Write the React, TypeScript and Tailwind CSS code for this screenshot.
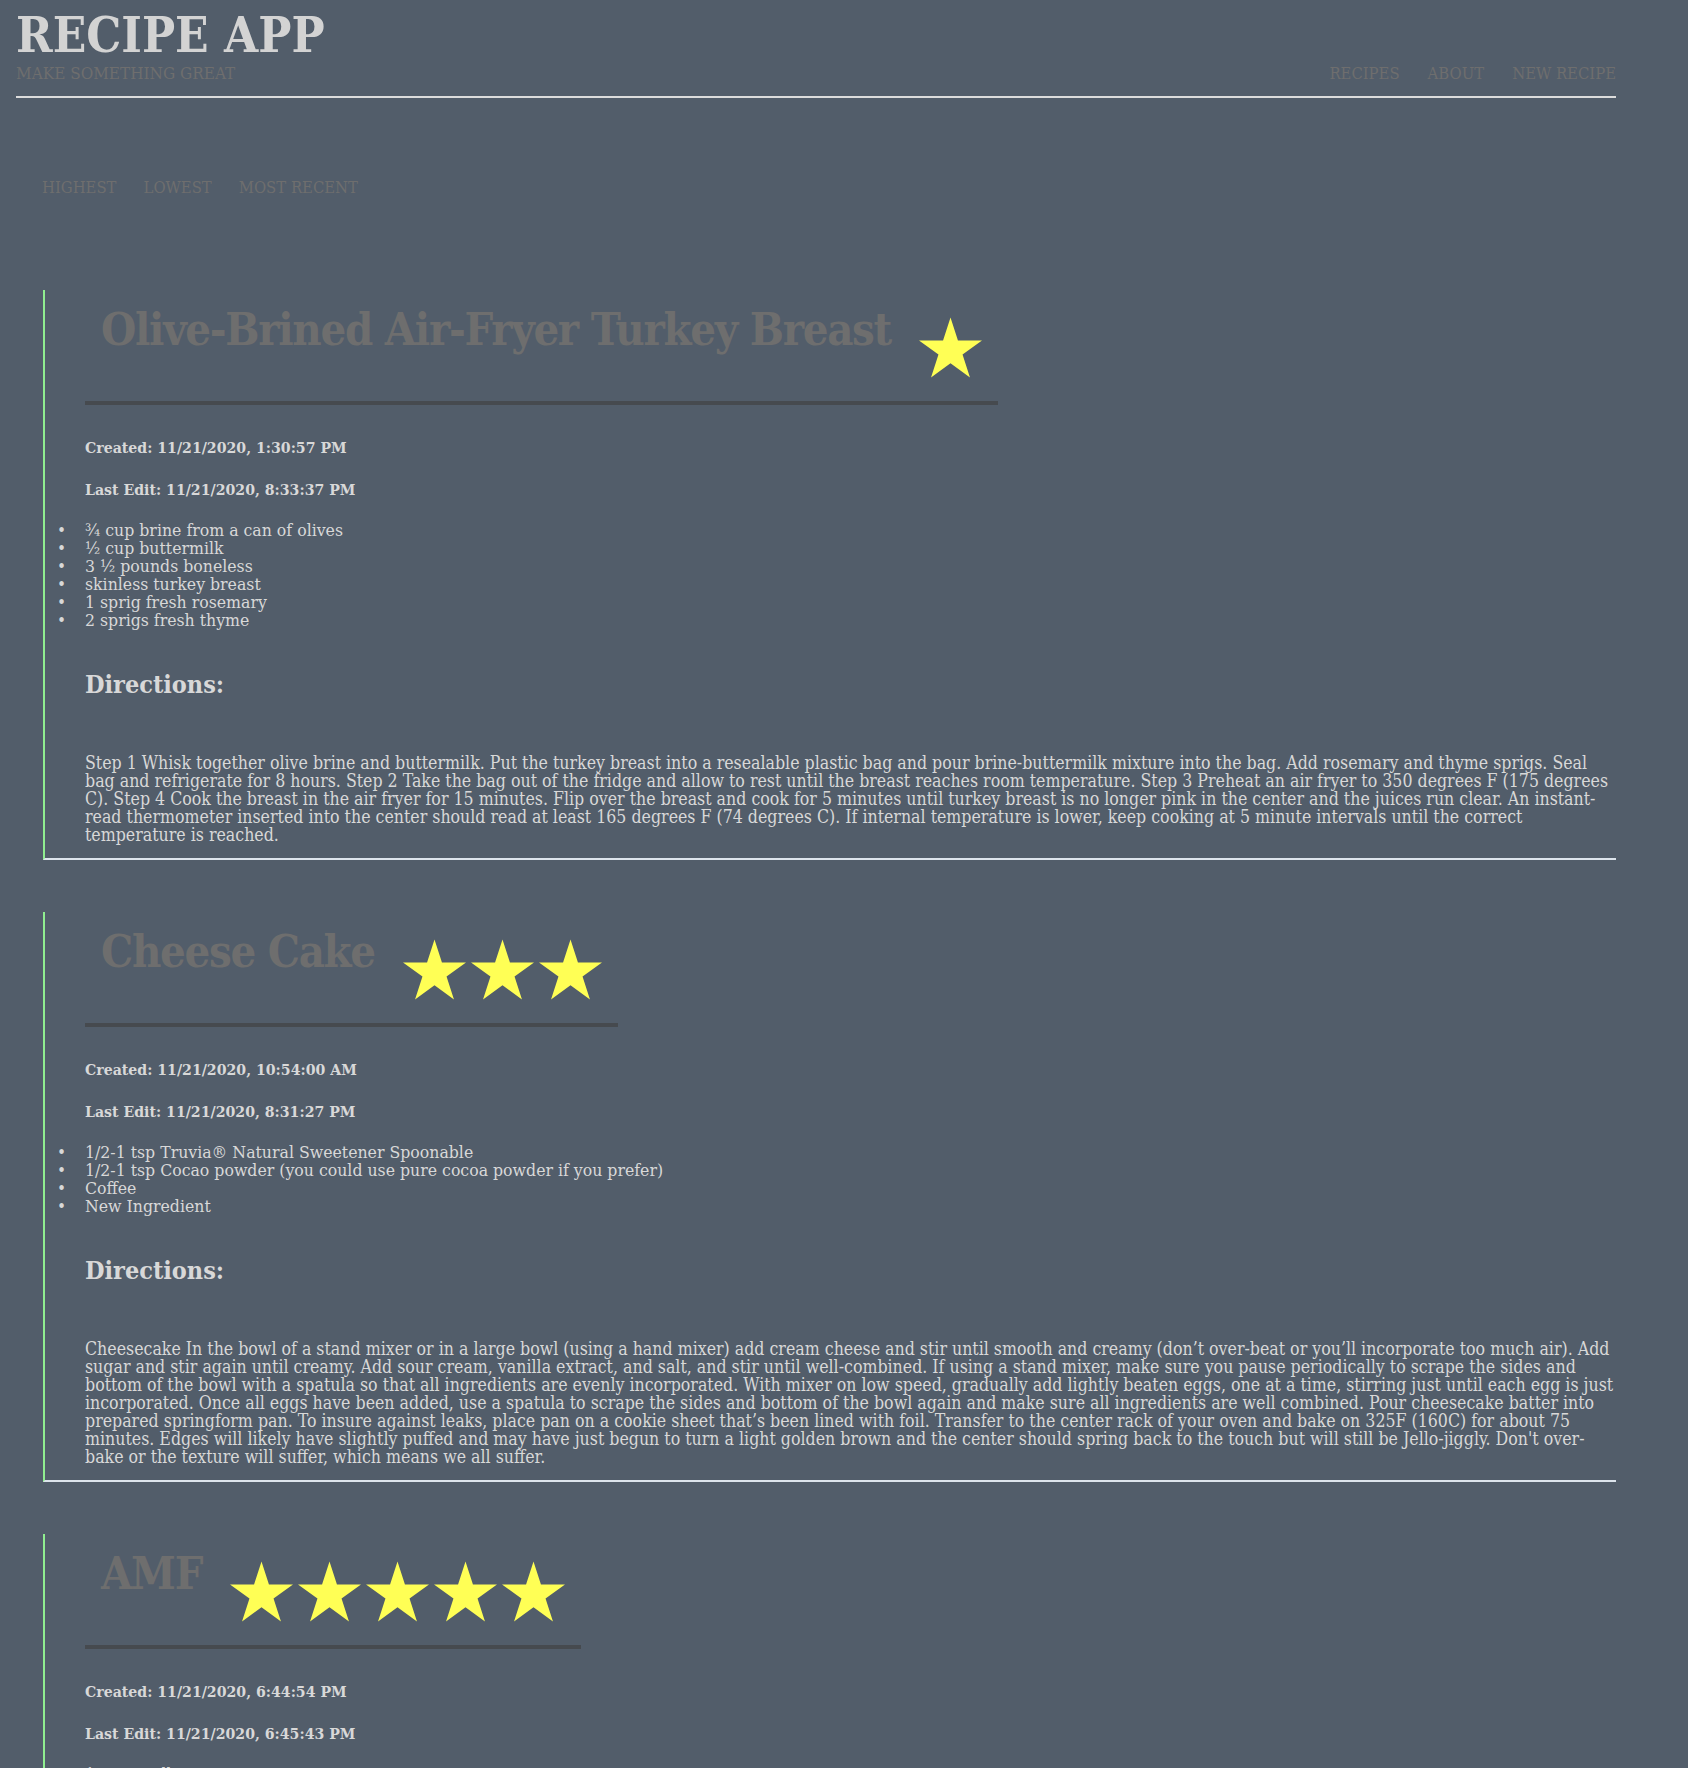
import React from "react";

type Recipe = {
  title: string;
  stars: number;
  created: string;
  edited: string;
  ingredients: string[];
  directions: string;
};

const recipes: Recipe[] = [
  {
    title: "Olive-Brined Air-Fryer Turkey Breast",
    stars: 1,
    created: "11/21/2020, 1:30:57 PM",
    edited: "11/21/2020, 8:33:37 PM",
    ingredients: [
      "¾ cup brine from a can of olives",
      "½ cup buttermilk",
      "3 ½ pounds boneless",
      "skinless turkey breast",
      "1 sprig fresh rosemary",
      "2 sprigs fresh thyme",
    ],
    directions:
      "Step 1 Whisk together olive brine and buttermilk. Put the turkey breast into a resealable plastic bag and pour brine-buttermilk mixture into the bag. Add rosemary and thyme sprigs. Seal bag and refrigerate for 8 hours. Step 2 Take the bag out of the fridge and allow to rest until the breast reaches room temperature. Step 3 Preheat an air fryer to 350 degrees F (175 degrees C). Step 4 Cook the breast in the air fryer for 15 minutes. Flip over the breast and cook for 5 minutes until turkey breast is no longer pink in the center and the juices run clear. An instant-read thermometer inserted into the center should read at least 165 degrees F (74 degrees C). If internal temperature is lower, keep cooking at 5 minute intervals until the correct temperature is reached.",
  },
  {
    title: "Cheese Cake",
    stars: 3,
    created: "11/21/2020, 10:54:00 AM",
    edited: "11/21/2020, 8:31:27 PM",
    ingredients: [
      "1/2-1 tsp Truvia® Natural Sweetener Spoonable",
      "1/2-1 tsp Cocao powder (you could use pure cocoa powder if you prefer)",
      "Coffee",
      "New Ingredient",
    ],
    directions:
      "Cheesecake In the bowl of a stand mixer or in a large bowl (using a hand mixer) add cream cheese and stir until smooth and creamy (don’t over-beat or you’ll incorporate too much air). Add sugar and stir again until creamy. Add sour cream, vanilla extract, and salt, and stir until well-combined. If using a stand mixer, make sure you pause periodically to scrape the sides and bottom of the bowl with a spatula so that all ingredients are evenly incorporated. With mixer on low speed, gradually add lightly beaten eggs, one at a time, stirring just until each egg is just incorporated. Once all eggs have been added, use a spatula to scrape the sides and bottom of the bowl again and make sure all ingredients are well combined. Pour cheesecake batter into prepared springform pan. To insure against leaks, place pan on a cookie sheet that’s been lined with foil. Transfer to the center rack of your oven and bake on 325F (160C) for about 75 minutes. Edges will likely have slightly puffed and may have just begun to turn a light golden brown and the center should spring back to the touch but will still be Jello-jiggly. Don't over-bake or the texture will suffer, which means we all suffer.",
  },
  {
    title: "AMF",
    stars: 5,
    created: "11/21/2020, 6:44:54 PM",
    edited: "11/21/2020, 6:45:43 PM",
    ingredients: ["1/2 oz vodka", "1/2 oz rum", "1/2 oz tequila", "1/2 oz gin"],
    directions: "Pour everything over ice and top with lemon-lime soda.",
  },
];

function Star() {
  return (
    <svg viewBox="2.45 0 95.1 90.45" className="h-[61px] w-[63px] shrink-0">
      <polygon
        fill="#ffff55"
        points="50,0 61.23,34.55 97.55,34.55 68.17,55.9 79.39,90.45 50,69.1 20.61,90.45 31.83,55.9 2.45,34.55 38.77,34.55"
      />
    </svg>
  );
}

function RecipeCard({ recipe }: { recipe: Recipe }) {
  return (
    <article className="ml-px border-b-2 border-l-2 border-b-[#dde4ec] border-l-[#90ee90] pb-[14px] pl-[40px]">
      <div className="inline-flex items-start border-b-4 border-[#464a4f] px-4 pt-[15px] pb-[23px]">
        <h2 className="mt-[2px] text-[45px] font-bold leading-none tracking-[-1.3px] text-[#6e6e6e]">
          {recipe.title}
        </h2>
        <div className="ml-[28px] mt-[12px] flex gap-[5px]">
          {Array.from({ length: recipe.stars }).map((_, i) => (
            <Star key={i} />
          ))}
        </div>
      </div>

      <p className="mt-[31px] text-[15.7px] font-bold leading-6 text-[#d8d8d8]">
        Created: {recipe.created}
      </p>
      <p className="mt-[18px] text-[15.7px] font-bold leading-6 text-[#d8d8d8]">
        Last Edit: {recipe.edited}
      </p>

      <ul className="mt-[19px] text-[17.5px] leading-[18px] text-[#d8d8d8]">
        {recipe.ingredients.map((item) => (
          <li key={item} className="-ml-[28px] flex">
            <span className="w-[28px] shrink-0 text-[17px]">•</span>
            <span>{item}</span>
          </li>
        ))}
      </ul>

      <h3 className="mt-[40px] text-[25px] font-bold leading-8 text-[#d8d8d8]">
        Directions:
      </h3>
      <p className="mt-[53px] text-[17.6px] leading-[18px] text-[#d8d8d8]">
        {recipe.directions}
      </p>
    </article>
  );
}

export default function App() {
  return (
    <div className="min-h-screen bg-[#525d6a] pb-10 font-['DejaVu_Serif_Condensed','DejaVu_Serif',serif]">
      <header className="ml-4 flex w-[1600px] items-end justify-between border-b-2 border-[#dcdcdc] pt-[11px] pb-[14px]">
        <div>
          <h1 className="text-[49px] font-bold leading-none text-[#d3d3d3]">
            RECIPE APP
          </h1>
          <p className="mt-[5px] text-[17px] leading-[17px] text-[#6e6e6e]">
            MAKE SOMETHING GREAT
          </p>
        </div>
        <nav className="flex gap-[28px] text-[16.5px] leading-[17px] text-[#6e6e6e]">
          <a href="#">RECIPES</a>
          <a href="#">ABOUT</a>
          <a href="#">NEW RECIPE</a>
        </nav>
      </header>

      <main className="ml-[42px] w-[1574px]">
        <div className="mt-[81px] flex gap-[27px] text-[16.5px] leading-[17px] text-[#6e6e6e]">
          <a href="#">HIGHEST</a>
          <a href="#">LOWEST</a>
          <a href="#">MOST RECENT</a>
        </div>

        <div className="mt-[94px] flex flex-col gap-[52px]">
          {recipes.map((r) => (
            <RecipeCard key={r.title} recipe={r} />
          ))}
        </div>
      </main>
    </div>
  );
}
